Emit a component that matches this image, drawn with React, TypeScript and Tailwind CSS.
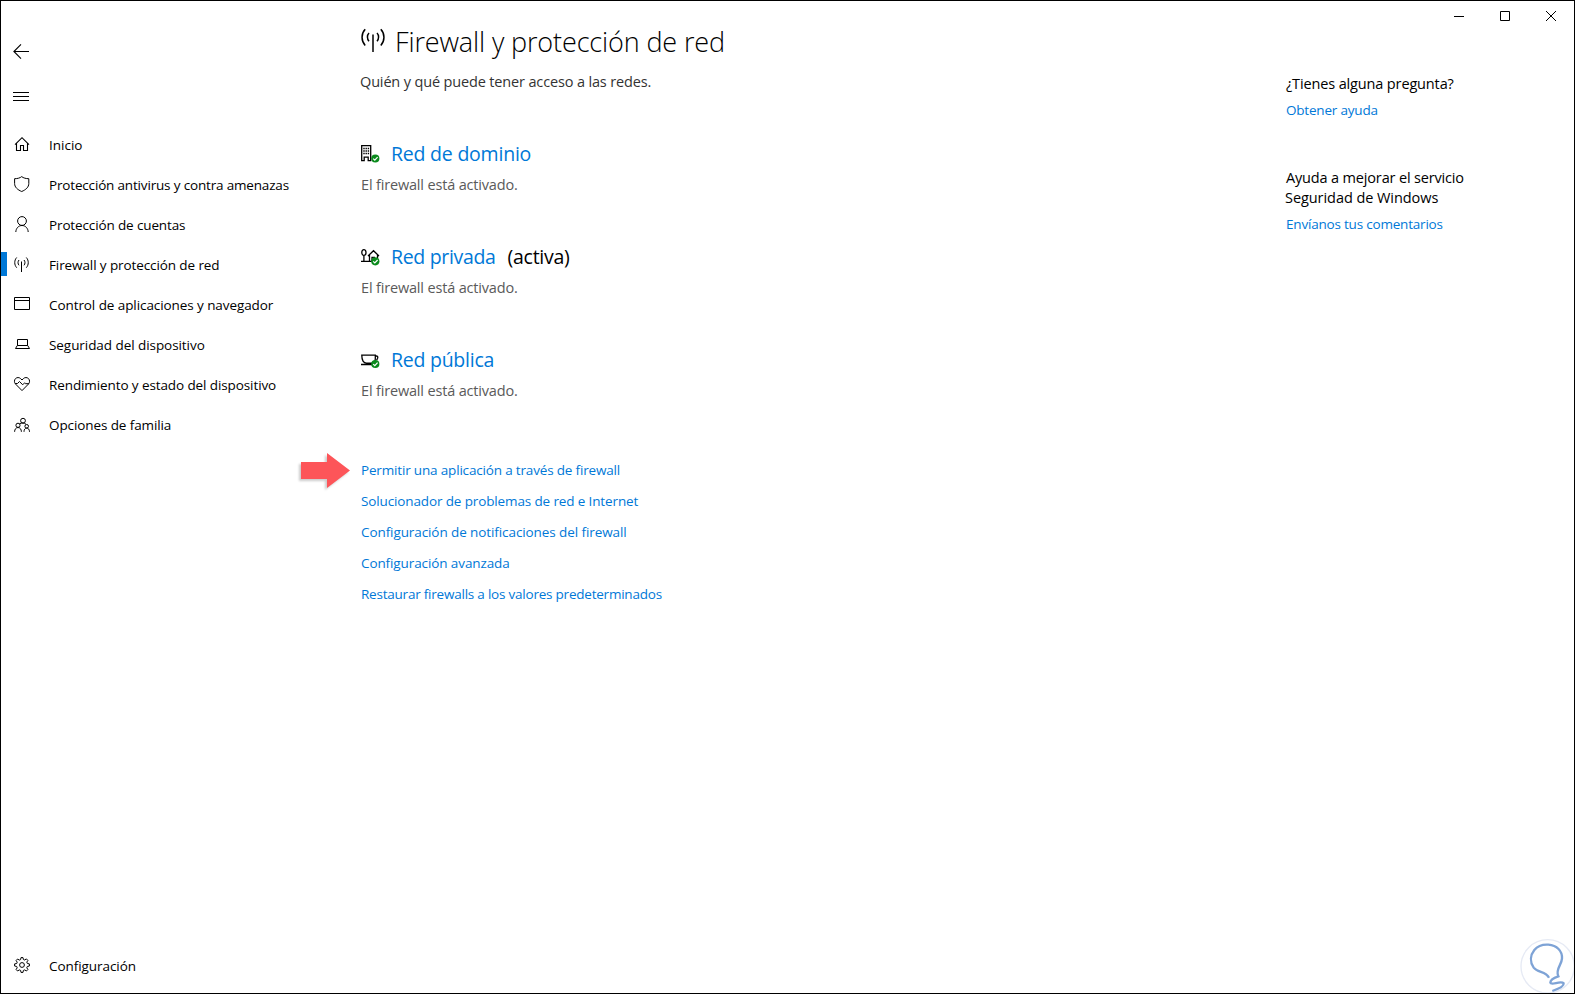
import type { ReactNode } from 'react'

const modulos = [
  { titulo: 'Inicio', icono: <IconoInicio />, tracking: 'tracking-normal' },
  { titulo: 'Protección antivirus y contra amenazas', icono: <IconoEscudo />, tracking: 'tracking-[-0.17px]' },
  { titulo: 'Protección de cuentas', icono: <IconoCuenta />, tracking: 'tracking-[-0.13px]' },
  { titulo: 'Firewall y protección de red', icono: <IconoAntena />, tracking: 'tracking-[-0.1px]', activo: true },
  { titulo: 'Control de aplicaciones y navegador', icono: <IconoVentana />, tracking: 'tracking-[-0.08px]' },
  { titulo: 'Seguridad del dispositivo', icono: <IconoPortatil />, tracking: 'tracking-[-0.06px]' },
  { titulo: 'Rendimiento y estado del dispositivo', icono: <IconoCorazon />, tracking: 'tracking-[-0.1px]' },
  { titulo: 'Opciones de familia', icono: <IconoFamilia />, tracking: 'tracking-[-0.1px]' },
]

const redes = [
  { titulo: 'Red de dominio', icono: <IconoEdificio />, tracking: 'tracking-[-0.22px]' },
  { titulo: 'Red privada', icono: <IconoCasa />, tracking: 'tracking-[-0.33px]', nota: '(activa)' },
  { titulo: 'Red pública', icono: <IconoTaza />, tracking: 'tracking-[-0.25px]' },
]

const enlaces = [
  { titulo: 'Permitir una aplicación a través de firewall', tracking: 'tracking-[-0.17px]' },
  { titulo: 'Solucionador de problemas de red e Internet', tracking: 'tracking-[-0.13px]' },
  { titulo: 'Configuración de notificaciones del firewall', tracking: 'tracking-[-0.09px]' },
  { titulo: 'Configuración avanzada', tracking: 'tracking-[-0.1px]' },
  { titulo: 'Restaurar firewalls a los valores predeterminados', tracking: 'tracking-[-0.22px]' },
]

function Icono({ children }: { children: ReactNode }) {
  return (
    <svg width="16" height="16" viewBox="0 0 16 16" fill="none" stroke="#000" strokeWidth="1" className="shrink-0 overflow-visible">
      {children}
    </svg>
  )
}

function IconoInicio() {
  return (
    <Icono>
      <path d="M1 8.6 8 1.7l7 6.9M2.5 7.3v7.2h4v-5h3v5h4V7.3" strokeWidth="1.1" />
    </Icono>
  )
}

function IconoEscudo() {
  return (
    <Icono>
      <path d="M7.7.6C6 2 3.5 2.7.6 2.7v4.800c0 3.700 3 6.300 7.100 8 4.100-1.700 7.100-4.300 7.100-8V2.700C11.900 2.700 9.400 2 7.700.6Z" />
    </Icono>
  )
}

function IconoCuenta() {
  return (
    <Icono>
      <circle cx="8" cy="5" r="4.4" />
      <path d="M1.800 16c.2-3.800 2.800-6.500 6.200-6.500s6 2.700 6.200 6.500" />
    </Icono>
  )
}

function IconoAntena() {
  return (
    <Icono>
      <path d="M7.500 5.500V16" />
      <path d="M5 4c-1.300 1.400-1.300 3.900 0 5.300M10 4c1.300 1.400 1.300 3.900 0 5.300M2.700 1.500C.1 4.300.1 8.900 2.700 11.700M12.300 1.500c2.600 2.800 2.600 7.400 0 10.200" />
    </Icono>
  )
}

function IconoVentana() {
  return (
    <Icono>
      <path d="M.5 1.500h15v12H.5zM.5 4.500h15" />
    </Icono>
  )
}

function IconoPortatil() {
  return (
    <Icono>
      <path d="M3.500 9.500v-6h10v6M3.300 9.500h10.400l1.800 3h-14z" />
    </Icono>
  )
}

function IconoCorazon() {
  return (
    <Icono>
      <path d="M8 14.600 1.500 8C.1 6.500.1 4 1.500 2.600s3.700-1.400 5.100 0L8 4l1.400-1.400c1.400-1.400 3.700-1.400 5.100 0s1.400 3.900 0 5.400z" />
      <path d="M1.200 7.500h2.300l2-2 3.200 3.300 2-2 .9.900h3.200" />
    </Icono>
  )
}

function IconoFamilia() {
  return (
    <Icono>
      <circle cx="9" cy="4.700" r="2.400" />
      <circle cx="4" cy="9.300" r="2.100" />
      <circle cx="12.700" cy="10.300" r="1.800" />
      <path d="M.6 15.800c0-2.500 1.400-4.300 3.400-4.300s3.400 1.800 3.400 4.300M10 15.800c0-2.200 1-3.700 2.700-3.700s2.800 1.500 2.800 3.700M5.600 7.800C6.500 7.200 7.600 7 9 7c1.300 0 2.300.5 3.100 1.400" />
    </Icono>
  )
}

function IconoEngranaje() {
  return (
    <Icono>
      <circle cx="8" cy="8" r="2.400" />
      <path
        strokeLinejoin="round"
        d="M7 .6h2l.4 1.900 1.300.5 1.700-1.100 1.500 1.500-1.100 1.700.5 1.300 2.100.5v2.100l-2.100.5-.5 1.300 1.100 1.700-1.500 1.500-1.700-1.100-1.300.5-.4 2H7l-.4-2-1.300-.5L3.600 14l-1.500-1.500 1.100-1.700-.5-1.300L.6 9V6.900l2.100-.4.5-1.300-1.100-1.700L3.600 2l1.700 1.100 1.300-.5z"
      />
    </Icono>
  )
}

// Marca verde sobre cada icono de red
function Marca({ cy }: { cy: number }) {
  return (
    <g>
      <circle cx="14.300" cy={cy} r="4.100" fill="#0a8a1c" stroke="none" />
      <path d={`M12.2 ${cy + 0.1}l1.600 1.600 2.800-3`} stroke="#fff" strokeWidth="1.200" />
    </g>
  )
}

function IconoRed({ children }: { children: ReactNode }) {
  return (
    <svg width="19" height="18" viewBox="0 0 19 18" fill="none" stroke="#000" strokeWidth="1.300" className="shrink-0 overflow-visible">
      {children}
    </svg>
  )
}

function IconoEdificio() {
  return (
    <IconoRed>
      <path d="M.7.700h9v15H7.200v-3.500h-4v3.500H.7z" />
      <path d="M2.300 3.500H8.100M2.300 6H8.100M2.300 8.500H8.100" strokeDasharray="1.400 .8" strokeWidth="1.400" />
      <Marca cy={13.500} />
    </IconoRed>
  )
}

function IconoCasa() {
  return (
    <IconoRed>
      <ellipse cx="2.900" cy="4.500" rx="2.100" ry="2.900" />
      <path d="M2.900 7.500v5.800M0 13.300h12M7 8l5.500-5.300L18 8M8.500 7v6M16.500 7v3M11 13V9.300h3" />
      <Marca cy={13.300} />
    </IconoRed>
  )
}

function IconoTaza() {
  return (
    <IconoRed>
      <path d="M.8 4.200h13.500v3.500c0 3-1.500 4.500-4 4.500H5.500C2.500 12.200.8 9.200.8 4.200ZM14.300 5h1c1.300 0 1.800 1 1.300 2.300l-1 2M0 13.500h11.500" />
      <Marca cy={13} />
    </IconoRed>
  )
}

function BarraLateral() {
  return (
    <aside className="flex w-[359px] shrink-0 flex-col pt-[29px] pb-[7px]">
      <div className="flex h-[45px] items-center pl-3">
        <svg width="16" height="15" viewBox="0 0 16 15" fill="none" stroke="#000" strokeWidth="1.100" className="mb-0.5">
          <path d="M16 7.500H.8M8 .4.900 7.500 8 14.600" />
        </svg>
      </div>
      <div className="flex h-11 items-center pl-3">
        <svg width="16" height="10" viewBox="0 0 16 10" stroke="#000" strokeWidth="1">
          <path d="M0 .5h16M0 4.500h16M0 8.500h16" />
        </svg>
      </div>

      <nav className="mt-1.5">
        {modulos.map(m => (
          <div key={m.titulo} className="flex h-10 items-center">
            <span className={m.activo ? 'mb-0.5 h-6 w-1.5 bg-[#0078d7]' : 'w-1.5'} />
            <span className="mb-0.5 ml-[7px]">{m.icono}</span>
            <span className={`ml-[19px] ${m.tracking}`}>{m.titulo}</span>
          </div>
        ))}
      </nav>

      <div className="mt-auto flex h-10 items-center pl-[13px]">
        <span className="mb-0.5"><IconoEngranaje /></span>
        <span className="ml-[19px] tracking-[-0.06px]">Configuración</span>
      </div>
    </aside>
  )
}

function Ayuda() {
  return (
    <aside className="w-[288px] shrink-0 pt-[73px]">
      <p className="text-[14.5px] leading-5 tracking-[-0.14px]">¿Tienes alguna pregunta?</p>
      <a className="mt-1.5 block leading-5 tracking-[-0.2px] text-[#0078d7]">Obtener ayuda</a>
      <p className="mt-12 text-[14.5px] leading-5">
        <span className="tracking-[-0.16px]">Ayuda a mejorar el servicio</span>
        <br />
        <span className="-ml-px tracking-[-0.06px]">Seguridad de Windows</span>
      </p>
      <a className="mt-1.5 block leading-5 tracking-[-0.2px] text-[#0078d7]">Envíanos tus comentarios</a>
    </aside>
  )
}

export default function App() {
  return (
    <div className="relative flex h-[994px] w-[1575px] overflow-hidden border border-black bg-white font-['Open_Sans',sans-serif] text-[13.5px] leading-5 text-black">
      <BarraLateral />

      <main className="flex-1 pt-[23px] pl-px">
        <div className="flex h-9 items-center">
          <svg width="25" height="24" viewBox="0 0 25 24" fill="none" stroke="#000" strokeWidth="1.500" className="mb-1">
            <path d="M12 6.500V24" />
            <path d="M8 5c-2.100 2.200-2.100 6 0 8.200M16 5c2.100 2.200 2.100 6 0 8.200M4.200 1.200C0 5.600 0 13 4.200 17.400M19.800 1.200C24 5.600 24 13 19.800 17.400" />
          </svg>
          <h1 className="ml-[9px] text-[27px] leading-9 font-[360] tracking-[-0.13px]">Firewall y protección de red</h1>
        </div>
        <p className="mt-3 -ml-px text-[14.5px] leading-5 tracking-[-0.15px] text-[#333]">
          Quién y qué puede tener acceso a las redes.
        </p>

        {/* Redes */}
        <div className="mt-12 flex flex-col gap-12">
          {redes.map(r => (
            <section key={r.titulo}>
              <h2 className="flex h-7 items-center text-[19.5px] leading-7">
                <span className="mr-[11px] mb-px">{r.icono}</span>
                <a className={`text-[#0078d7] ${r.tracking}`}>{r.titulo}</a>
                {r.nota && <span className="ml-3 tracking-[-0.27px]">{r.nota}</span>}
              </h2>
              <p className="mt-[7px] text-[14.5px] leading-5 tracking-[-0.17px] text-[#5a5a5a]">El firewall está activado.</p>
            </section>
          ))}
        </div>

        {/* Enlaces */}
        <ul className="mt-[59px] flex flex-col gap-[11px] text-[#0078d7]">
          {enlaces.map(e => (
            <li key={e.titulo} className={e.tracking}>{e.titulo}</li>
          ))}
        </ul>
      </main>

      <Ayuda />

      {/* Botones de la ventana */}
      <div className="absolute top-[9px] right-[18px] flex gap-9">
        <svg width="10" height="12" viewBox="0 0 10 12" stroke="#000"><path d="M0 6.500h10" /></svg>
        <svg width="10" height="12" viewBox="0 0 10 12" fill="none" stroke="#000"><path d="M.5 1.500h9v9h-9z" /></svg>
        <svg width="10" height="12" viewBox="0 0 10 12" stroke="#000"><path d="M0 1l10 10M10 1 0 11" /></svg>
      </div>

      {/* Flecha */}
      <svg width="54" height="40" viewBox="0 0 54 40" className="absolute top-[450px] left-[297px] drop-shadow-[-2px_2px_1px_rgba(0,0,0,0.2)]">
        <path d="M3 11h26V2l23 17.500L29 37v-9H3z" fill="#fd5559" />
      </svg>

      {/* Logo */}
      <svg width="55" height="55" viewBox="42 42 165 165" fill="none" className="absolute right-0 bottom-0">
        <circle cx="128" cy="127" r="80" stroke="#e6eaf4" strokeWidth="4" />
        <path
          d="M132 161C122 141 98 147 86 131C74 113 76 93 88 78C98 66 114 61 130 62C156 64 172 81 171 103C170 125 150 135 160 157C148 161 136 169 136 176C138 185 168 169 176 178C178 189 154 197 142 201"
          stroke="#7ea3d6"
          strokeWidth="7"
        />
      </svg>
    </div>
  )
}
